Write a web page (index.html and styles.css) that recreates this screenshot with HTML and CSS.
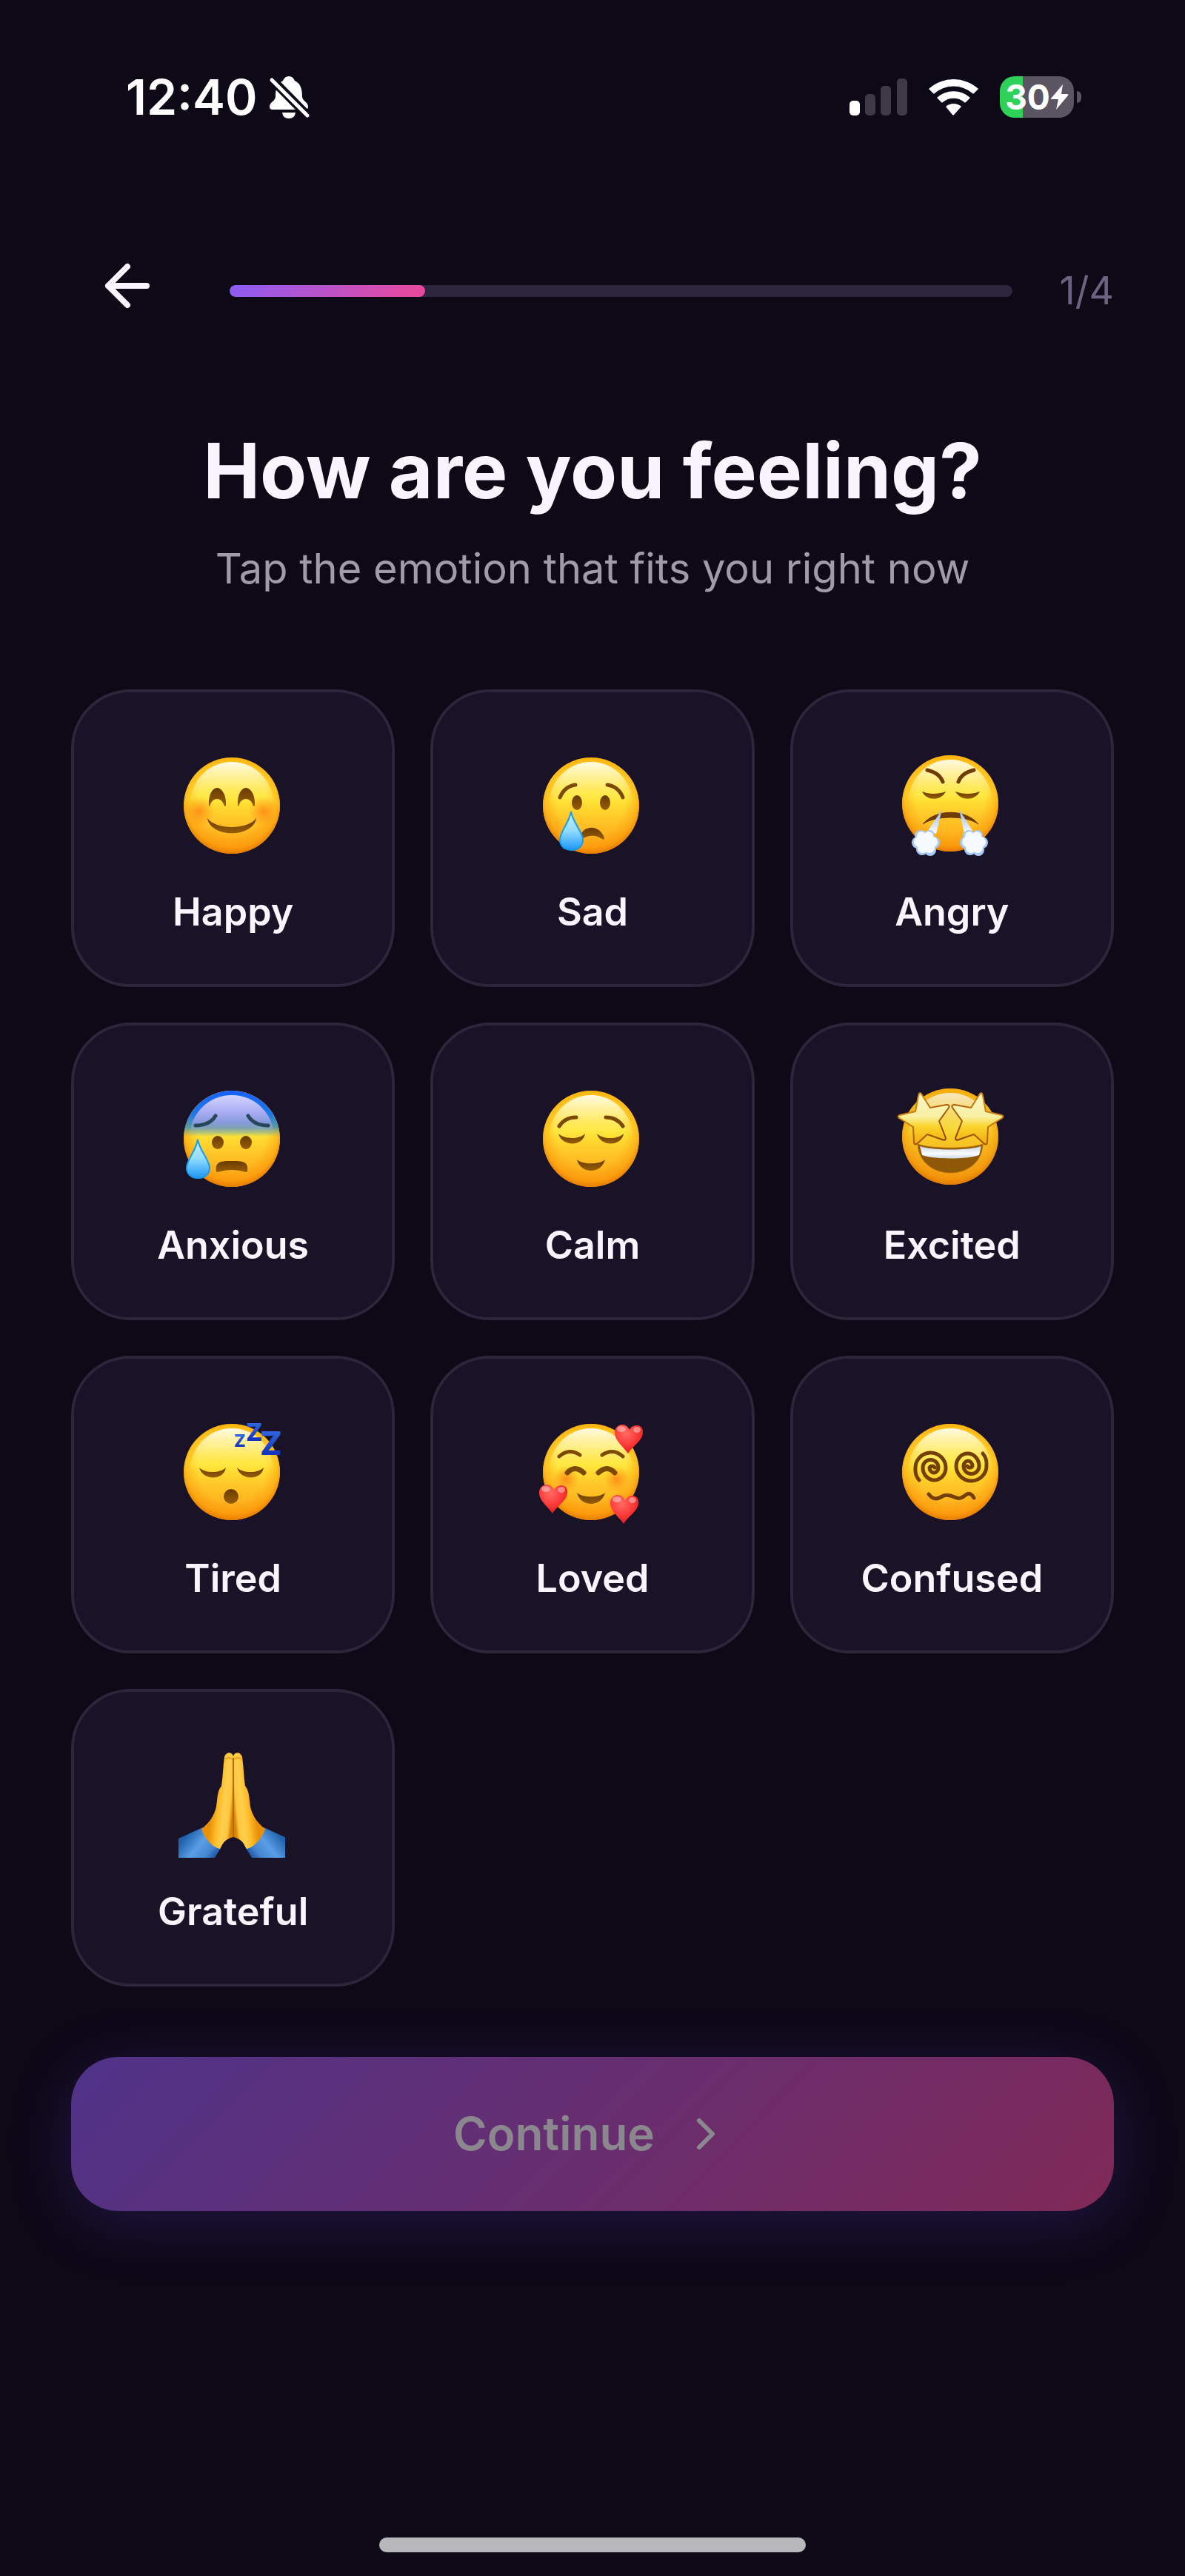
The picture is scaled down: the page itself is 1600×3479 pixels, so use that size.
FILE: index.html
```html
<!DOCTYPE html>
<html lang="en">
<head>
    <meta charset="UTF-8">
    <meta name="viewport" content="width=device-width, initial-scale=1.0">
    <title>How are you feeling?</title>
    <link rel="stylesheet" href="styles.css">
</head>
<body>
    <!-- shared gradients and shapes for the emoji -->
    <svg class="defs" width="0" height="0" aria-hidden="true">
        <defs>
            <linearGradient id="skin" x1="0" y1="0" x2="0" y2="1">
                <stop offset="0" stop-color="#ffc814"/>
                <stop offset="0.2" stop-color="#ffdc32"/>
                <stop offset="0.42" stop-color="#ffe634"/>
                <stop offset="0.65" stop-color="#ffc528"/>
                <stop offset="1" stop-color="#fd9f12"/>
            </linearGradient>
            <radialGradient id="rim" cx="0.5" cy="0.46" r="0.54">
                <stop offset="0.65" stop-color="#f98a00" stop-opacity="0"/>
                <stop offset="0.88" stop-color="#f98a00" stop-opacity="0.4"/>
                <stop offset="1" stop-color="#e07800" stop-opacity="0.9"/>
            </radialGradient>
            <linearGradient id="shine" x1="0" y1="0" x2="0" y2="1">
                <stop offset="0" stop-color="#fffef0" stop-opacity="0.95"/>
                <stop offset="0.22" stop-color="#fff8b8" stop-opacity="0.65"/>
                <stop offset="0.52" stop-color="#ffee60" stop-opacity="0"/>
            </linearGradient>
            <linearGradient id="brown" x1="0" y1="0" x2="0" y2="1">
                <stop offset="0" stop-color="#6b3c00"/>
                <stop offset="1" stop-color="#965d08"/>
            </linearGradient>
            <radialGradient id="blush">
                <stop offset="0" stop-color="#ff7a14" stop-opacity="0.75"/>
                <stop offset="1" stop-color="#ff8c14" stop-opacity="0"/>
            </radialGradient>
            <linearGradient id="water" x1="0" y1="0" x2="0" y2="1">
                <stop offset="0" stop-color="#c8f0ff"/>
                <stop offset="0.5" stop-color="#8fdcff"/>
                <stop offset="1" stop-color="#1e96f5"/>
            </linearGradient>
            <linearGradient id="cold" x1="0" y1="0" x2="0" y2="1">
                <stop offset="0" stop-color="#1560ff"/>
                <stop offset="0.25" stop-color="#1f7ae6"/>
                <stop offset="0.38" stop-color="#2f8fc4" stop-opacity="0.8"/>
                <stop offset="0.48" stop-color="#5aa0a0" stop-opacity="0"/>
            </linearGradient>
            <linearGradient id="coldShine" x1="0" y1="0" x2="0" y2="1">
                <stop offset="0" stop-color="#d4d3ff"/>
                <stop offset="0.2" stop-color="#a9adf2"/>
                <stop offset="0.32" stop-color="#8a9ade"/>
                <stop offset="0.48" stop-color="#a8b098" stop-opacity="0"/>
            </linearGradient>
            <linearGradient id="star" x1="0" y1="0" x2="0" y2="1">
                <stop offset="0" stop-color="#fff6c8"/>
                <stop offset="0.45" stop-color="#f6f0a4"/>
                <stop offset="0.65" stop-color="#fbd52c"/>
                <stop offset="1" stop-color="#f0a80c"/>
            </linearGradient>
            <linearGradient id="starEdge" x1="0" y1="0" x2="1" y2="1">
                <stop offset="0" stop-color="#f0a018"/>
                <stop offset="0.5" stop-color="#b86808"/>
                <stop offset="1" stop-color="#7a3c04"/>
            </linearGradient>
            <linearGradient id="teeth" x1="0" y1="0" x2="0" y2="1">
                <stop offset="0" stop-color="#c9d4dc"/>
                <stop offset="0.6" stop-color="#fafcff"/>
                <stop offset="1" stop-color="#cfdae6"/>
            </linearGradient>
            <linearGradient id="zzz" x1="0" y1="0" x2="0" y2="1">
                <stop offset="0.2" stop-color="#2f66e0"/>
                <stop offset="1" stop-color="#0620b0"/>
            </linearGradient>
            <radialGradient id="love" cx="0.4" cy="0.3" r="0.7">
                <stop offset="0" stop-color="#ff6a64"/>
                <stop offset="0.6" stop-color="#fb3a38"/>
                <stop offset="1" stop-color="#e01c1c"/>
            </radialGradient>
            <linearGradient id="hand" gradientUnits="userSpaceOnUse" x1="46" y1="60" x2="75" y2="63">
                <stop offset="0" stop-color="#e89108"/>
                <stop offset="0.35" stop-color="#ffbe2c"/>
                <stop offset="0.6" stop-color="#ffcf4e"/>
                <stop offset="0.85" stop-color="#ffc63c"/>
                <stop offset="1" stop-color="#d88408"/>
            </linearGradient>
            <linearGradient id="sleeve" gradientUnits="userSpaceOnUse" x1="16" y1="106" x2="58" y2="140">
                <stop offset="0" stop-color="#1f61ac"/>
                <stop offset="0.4" stop-color="#5a9ee6"/>
                <stop offset="0.7" stop-color="#4686d2"/>
                <stop offset="1" stop-color="#0c3c8c"/>
            </linearGradient>
            <linearGradient id="steam" x1="0" y1="0" x2="0" y2="1">
                <stop offset="0" stop-color="#8fb4e8"/>
                <stop offset="1" stop-color="#ffffff"/>
            </linearGradient>
            <clipPath id="emojiBox">
                <rect x="0" y="0" width="144" height="144"/>
            </clipPath>

            <g id="face">
                <circle cx="72" cy="72" r="65" fill="url(#skin)"/>
                <circle cx="72" cy="72" r="65" fill="url(#rim)"/>
                <ellipse cx="72" cy="70" rx="56" ry="57" fill="url(#shine)"/>
            </g>
            <path id="tear" d="M15 0 C17 14 31 28 31 38 C31 47 24 52 15.500 52 S0 47 0 38 C0 28 13 14 15 0Z" fill="url(#water)" stroke="#169cf0" stroke-width="2"/>
            <path id="lid" d="M0 0 C8 8 28 8 36 0 C33 18 5 18 0 0Z" fill="url(#brown)"/>
            <g id="heart">
                <path d="M18 39 C12 30 0 22 0 11 C0 4 5 0 10 0 C15 0 18 3 20 7 C22 3 26 1 30 1 C36 1 39 6 38 12 C37 22 24 29 18 39Z" fill="url(#love)"/>
                <ellipse cx="9" cy="6" rx="6" ry="4" fill="#ffffff" opacity="0.4"/>
                <ellipse cx="30" cy="7" rx="5" ry="4" fill="#ffffff" opacity="0.4"/>
            </g>
            <g id="cloud">
                <g fill="#a9caf5">
                    <circle cx="8" cy="18" r="8"/><circle cx="14" cy="27" r="8"/><circle cx="25" cy="28" r="8"/>
                    <circle cx="30" cy="18" r="8"/><circle cx="24" cy="8" r="7"/><circle cx="12" cy="9" r="8"/>
                </g>
                <g fill="#f6faff">
                    <circle cx="19" cy="17" r="12"/><circle cx="10" cy="17" r="7"/><circle cx="15" cy="25" r="7"/>
                    <circle cx="24" cy="25" r="7"/><circle cx="28" cy="17" r="7"/><circle cx="13" cy="9" r="6"/><circle cx="23" cy="9" r="6"/>
                </g>
            </g>
            <path id="eyeStar" d="M30 11 Q32 9 34 13 L45 30 L67 26 Q72 26 70 30 L57 48 L66 71 Q66 75 61 73 L41 66 L27 79 Q23 81 23 76 L22 56 L3 44 Q0 41 4 40 L25 35 L29 14Z" fill="url(#star)" stroke="url(#starEdge)" stroke-width="2" stroke-linejoin="round"/>
            <path id="spiral" d="M30 83 A22 22 0 0 1 25 67 A20.500 20.500 0 0 1 66 66 A15.500 17 0 0 1 35 66 A10.500 10.500 0 0 1 56 66 A6 7 0 0 1 44 66 A4 4 0 0 1 51 66" fill="none" stroke="#743f04" stroke-width="5" stroke-linecap="round"/>
            <g id="prayHalf">
                <path d="M0 117 L33 102 L57 130 L49 143 H0Z" fill="url(#sleeve)"/>
                <path d="M74 115 V6 C73 0 64 -1 62 7 C60 20 60 34 58 46 C51 54 53 68 50 78 C46 90 39 98 31 104 C35 116 44 128 56 131 C60 125 60 119 74 115Z" fill="url(#hand)"/>
                <path d="M63 10 Q68 6 73 10" fill="none" stroke="#eda41c" stroke-width="2"/>
            </g>
        </defs>
    </svg>

    <header class="status-bar">
        <div class="status-left">
            <span class="time">12:40</span>
            <svg width="53" height="57" viewBox="0 0 53 57" aria-label="Silent">
                <path d="M26 0 C31 0 33 4 34 6 C42 10 44 17 44 28 C45 34 52 35 52 41 Q52 45 48 45 H4 Q0 45 0 41 C0 35 7 34 8 28 C8 17 10 10 18 6 C19 4 21 0 26 0Z" fill="#fff"/>
                <path d="M17 49 H35 Q34 57 26 57 T17 49Z" fill="#fff"/>
                <path d="M-2 -1 L56 58" stroke="#0d0917" stroke-width="12"/>
                <path d="M3 5 L51 53" stroke="#fff" stroke-width="5" stroke-linecap="round"/>
            </svg>
        </div>
        <div class="status-right">
            <svg width="78" height="50" viewBox="0 0 78 50" aria-label="Signal">
                <rect x="0" y="30" width="14" height="20" rx="5" fill="#fff"/>
                <rect x="21" y="21" width="14" height="29" rx="5" fill="#3e3847"/>
                <rect x="42" y="10" width="14" height="40" rx="5" fill="#3e3847"/>
                <rect x="64" y="0" width="14" height="50" rx="5" fill="#3e3847"/>
            </svg>
            <svg width="67" height="50" viewBox="0 0 67 50" fill="#fff" aria-label="Wi-Fi">
                <path d="M0 14 A50 50 0 0 1 67 14 L61 20 Q60 21 59 20 A39 39 0 0 0 8 20 Q7 21 6 20Z"/>
                <path d="M11 26 A33 33 0 0 1 56 26 L50 32 Q49 33 48 32 A23 23 0 0 0 19 32 Q18 33 17 32Z"/>
                <path d="M23 38 A16 16 0 0 1 44 38 L34 49 Q33 50 32 49Z"/>
            </svg>
            <div class="battery">
                <div class="battery-body">
                    <span>30</span>
                    <svg width="24" height="34" viewBox="0 0 24 34" aria-hidden="true">
                        <path d="M16 0 L0 19 Q-1 20 1 20 H10 L7 34 L23 15 Q24 13 22 13 H14Z" fill="#fff"/>
                    </svg>
                </div>
                <div class="battery-tip"></div>
            </div>
        </div>
    </header>

    <main class="content">
        <nav class="step-nav">
            <button class="back" type="button" aria-label="Back">
                <svg width="60" height="60" viewBox="0 0 60 60" fill="none" stroke="#f8f5ff" stroke-width="8" stroke-linecap="round" stroke-linejoin="round">
                    <path d="M30 4 L4 30 L30 56 M4 30 H56"/>
                </svg>
            </button>
            <div class="progress" role="progressbar" aria-label="Step" aria-valuemin="0" aria-valuemax="4" aria-valuenow="1">
                <div class="progress-fill"></div>
            </div>
            <span class="step-count">1/4</span>
        </nav>

        <h1>How are you feeling?</h1>
        <p class="subtitle">Tap the emotion that fits you right now</p>

        <div class="emotions">
            <button class="emotion" type="button">
                <svg class="emoji" viewBox="0 0 148 144" aria-hidden="true">
                    <use href="#face"/>
                    <circle cx="28" cy="80" r="21" fill="url(#blush)"/>
                    <circle cx="115" cy="80" r="21" fill="url(#blush)"/>
                    <path d="M41 72 C40 57 46 48 52 48 S65 57 64 72 Q62 74 61 70 Q58 63 52 63 T43 70 Q42 74 41 72Z" fill="url(#brown)"/>
                    <path d="M80 72 C79 57 85 48 91 48 S104 57 103 72 Q101 74 100 70 Q97 63 91 63 T82 70 Q81 74 80 72Z" fill="url(#brown)"/>
                    <path d="M39 89 C50 105 94 105 105 89 C101 116 43 116 39 89Z" fill="url(#brown)"/>
                </svg>
                <span>Happy</span>
            </button>
            <button class="emotion" type="button">
                <svg class="emoji" viewBox="0 0 148 144" aria-hidden="true">
                    <use href="#face"/>
                    <path d="M30 61 Q36 46 51 44 M115 61 Q109 46 94 44" fill="none" stroke="#7c4a02" stroke-width="5" stroke-linecap="round"/>
                    <ellipse cx="53" cy="68" rx="7" ry="10" fill="url(#brown)"/>
                    <ellipse cx="91" cy="68" rx="7" ry="10" fill="url(#brown)"/>
                    <path d="M56 117 C60 97 84 97 90 116 Q90 119 87 117 Q74 108 58 118Z" fill="url(#brown)"/>
                    <use href="#tear" x="30" y="80"/>
                </svg>
                <span>Sad</span>
            </button>
            <button class="emotion" type="button">
                <svg class="emoji" viewBox="0 0 148 144" aria-hidden="true">
                    <use href="#face" y="-3"/>
                    <path d="M41 24 Q58 28 62 40 M104 24 Q87 28 83 40" fill="none" stroke="#6f3c02" stroke-width="5" stroke-linecap="round"/>
                    <path d="M34 53 C43 57 56 57 66 53 C60 66 40 66 34 53Z M79 53 C89 57 102 57 112 53 C105 66 86 66 79 53Z" fill="url(#brown)"/>
                    <path d="M35 97 C52 76 93 76 110 97 C93 85 52 85 35 97Z" fill="#6f3c02" stroke="#6f3c02"/>
                    <path d="M61 77 L42 106 L53 110Z M84 77 L91 110 L102 106Z" fill="url(#steam)"/>
                    <use href="#cloud" x="20" y="104"/>
                    <use href="#cloud" x="85" y="104"/>
                </svg>
                <span>Angry</span>
            </button>
            <button class="emotion" type="button">
                <svg class="emoji" viewBox="0 0 148 144" aria-hidden="true">
                    <use href="#face"/>
                    <circle cx="72" cy="72" r="65" fill="url(#cold)"/>
                    <ellipse cx="72" cy="70" rx="57" ry="57" fill="url(#coldShine)"/>
                    <path d="M50 41 Q42 54 23 54 M94 41 Q102 54 121 54" fill="none" stroke="#25485a" stroke-width="5" stroke-linecap="round"/>
                    <ellipse cx="53" cy="77" rx="8" ry="9" fill="url(#brown)"/>
                    <ellipse cx="91" cy="77" rx="8" ry="9" fill="url(#brown)"/>
                    <path d="M51 116 C49 102 58 102 72 102 S95 102 93 116 C92 119 86 114 72 114 S52 119 51 116Z" fill="url(#brown)"/>
                    <use href="#tear" x="11" y="73"/>
                </svg>
                <span>Anxious</span>
            </button>
            <button class="emotion" type="button">
                <svg class="emoji" viewBox="0 0 148 144" aria-hidden="true">
                    <use href="#face"/>
                    <path d="M29 55 Q37 43 52 43 M115 55 Q107 43 92 43" fill="none" stroke="#7c4a02" stroke-width="5" stroke-linecap="round"/>
                    <use href="#lid" x="28" y="65"/>
                    <use href="#lid" x="80" y="65"/>
                    <path d="M53 100 C60 107 84 107 91 100 C86 120 58 120 53 100Z" fill="url(#brown)"/>
                </svg>
                <span>Calm</span>
            </button>
            <button class="emotion" type="button">
                <svg class="emoji" viewBox="0 0 148 144" aria-hidden="true">
                    <use href="#face" y="-3"/>
                    <circle cx="72" cy="69" r="65" fill="#c87800" opacity="0.15"/>
                    <path d="M28 79 C45 86 100 86 116 79 C114 131 31 131 28 79Z" fill="#8f5806" stroke="#b87408"/>
                    <path d="M31 82 C50 88 95 88 114 82 L111 94 C95 100 50 100 34 94Z" fill="url(#teeth)"/>
                    <use href="#eyeStar"/>
                    <use href="#eyeStar" transform="translate(145 0) scale(-1 1)"/>
                </svg>
                <span>Excited</span>
            </button>
            <button class="emotion" type="button">
                <svg class="emoji" viewBox="0 0 148 144" aria-hidden="true">
                    <use href="#face"/>
                    <use href="#lid" x="28" y="66"/>
                    <use href="#lid" x="79" y="66"/>
                    <ellipse cx="71" cy="105" rx="10" ry="10" fill="url(#brown)"/>
                    <g class="zzz" fill="url(#zzz)">
                        <text x="75" y="38" font-size="23">Z</text>
                        <text x="91" y="30" font-size="33">Z</text>
                        <text x="110" y="49" font-size="44">Z</text>
                    </g>
                </svg>
                <span>Tired</span>
            </button>
            <button class="emotion" type="button">
                <svg class="emoji" viewBox="0 0 148 144" aria-hidden="true">
                    <use href="#face"/>
                    <circle cx="38" cy="82" r="18" fill="url(#blush)"/>
                    <circle cx="107" cy="82" r="18" fill="url(#blush)"/>
                    <path d="M29 51 Q42 39 57 49 M115 51 Q102 39 87 49" fill="none" stroke="#7c4a02" stroke-width="5" stroke-linecap="round"/>
                    <path d="M40 73 Q50 62 62 73 M82 73 Q94 62 104 73" fill="none" stroke="#7c4a02" stroke-width="7" stroke-linecap="round"/>
                    <path d="M53 100 C60 107 84 107 91 100 C86 120 58 120 53 100Z" fill="url(#brown)"/>
                    <use href="#heart" x="104" y="8"/>
                    <use href="#heart" x="2" y="89"/>
                    <use href="#heart" x="98" y="103"/>
                </svg>
                <span>Loved</span>
            </button>
            <button class="emotion" type="button">
                <svg class="emoji" viewBox="0 0 148 144" aria-hidden="true">
                    <use href="#face"/>
                    <use href="#spiral"/>
                    <use href="#spiral" transform="rotate(180 73 65)"/>
                    <path d="M43 102 C50 111 56 108 61 105 S72 103 78 106 S88 107 93 103 S102 103 104 107" fill="none" stroke="#743f04" stroke-width="5" stroke-linecap="round"/>
                </svg>
                <span>Confused</span>
            </button>
            <button class="emotion" type="button">
                <svg class="emoji" viewBox="0 0 148 144" aria-hidden="true">
                    <g clip-path="url(#emojiBox)">
                        <use href="#prayHalf"/>
                        <use href="#prayHalf" transform="translate(148 0) scale(-1 1)"/>
                        <path d="M74 8 V115" stroke="#b06a08" stroke-width="2"/>
                    </g>
                </svg>
                <span>Grateful</span>
            </button>
        </div>

        <button class="continue" type="button" disabled>
            <span>Continue</span>
            <svg width="64" height="64" viewBox="0 0 64 64" fill="none" stroke="currentColor" stroke-width="6" stroke-linecap="round" stroke-linejoin="round" aria-hidden="true">
                <path d="M20 14 L38 32 L20 50"/>
            </svg>
        </button>
    </main>

    <div class="home-indicator"></div>
</body>
</html>
```

FILE: styles.css
```css
* {
    box-sizing: border-box;
}
body {
    margin: 0;
    min-height: 100vh;
    display: flex;
    flex-direction: column;
    background-color: #0d0917;
    color: #f8f5ff;
    font-family: Inter, sans-serif;
}
button {
    font-family: inherit;
    cursor: pointer;
}
svg {
    display: block;
    overflow: visible;
}
.defs {
    position: absolute;
}

/* status bar */
.status-bar {
    display: flex;
    justify-content: space-between;
    align-items: center;
    padding: 91px 140px 0 170px;
}
.status-left {
    display: flex;
    align-items: center;
    gap: 16px;
}
.time {
    font-size: 66px;
    line-height: 80px;
    font-weight: 600;
    color: #fff;
}
.status-right {
    display: flex;
    align-items: center;
    gap: 29px;
}
.battery {
    display: flex;
    align-items: center;
    gap: 4px;
}
.battery-body {
    display: flex;
    align-items: center;
    justify-content: center;
    gap: 1px;
    width: 100px;
    height: 56px;
    border-radius: 20px;
    background: linear-gradient(to right, #30d158 31%, #5a5463 31%);
    color: #fff;
    font-size: 46px;
    line-height: 56px;
    font-weight: 700;
}
.battery-tip {
    width: 6px;
    height: 16px;
    border-radius: 0 6px 6px 0;
    background-color: #5a5463;
}

/* page */
.content {
    padding: 174px 96px 0;
}
.step-nav {
    display: flex;
    align-items: center;
    height: 96px;
    padding-left: 24px;
}
.back {
    display: flex;
    align-items: center;
    justify-content: center;
    align-self: flex-start;
    width: 104px;
    height: 82px;
    padding: 0;
    border: none;
    background: none;
}
.progress {
    flex: 1;
    height: 16px;
    margin: 0 64px 0 86px;
    border-radius: 8px;
    background-color: #2d243d;
    overflow: hidden;
}
.progress-fill {
    width: 25%;
    height: 100%;
    border-radius: 8px;
    background: linear-gradient(135deg, #8b5cf6, #ec4899);
}
.step-count {
    font-size: 52px;
    line-height: 64px;
    color: #6b6480;
}
h1 {
    margin: 131px 0 32px;
    font-size: 103px;
    line-height: 128px;
    font-weight: 700;
    text-align: center;
}
.subtitle {
    margin: 0 0 127px;
    font-size: 56px;
    line-height: 72px;
    text-align: center;
    color: #a09bab;
}

/* emotion cards */
.emotions {
    display: grid;
    grid-template-columns: repeat(3, 1fr);
    gap: 48px;
}
.emotion {
    display: flex;
    flex-direction: column;
    align-items: center;
    gap: 40px;
    padding: 81px 0 65px;
    border: 4px solid #2d253b;
    border-radius: 80px;
    background-color: #1a1226;
    color: #f8f5ff;
    font-size: 52px;
    line-height: 64px;
    font-weight: 600;
}
.emoji {
    width: 148px;
    height: 144px;
}
.zzz {
    font-weight: 800;
}

.continue {
    display: flex;
    align-items: center;
    justify-content: center;
    gap: 40px;
    width: 100%;
    height: 208px;
    margin-top: 95px;
    border: none;
    border-radius: 64px;
    background: linear-gradient(135deg, #4f3389, #802957);
    box-shadow: 0 16px 80px rgba(100, 60, 200, 0.25);
    color: #8b878f;
    font-size: 62px;
    line-height: 80px;
    font-weight: 600;
}

.home-indicator {
    width: 36%;
    height: 20px;
    margin: auto auto 32px;
    border-radius: 10px;
    background-color: #b8b7bb;
}
```
